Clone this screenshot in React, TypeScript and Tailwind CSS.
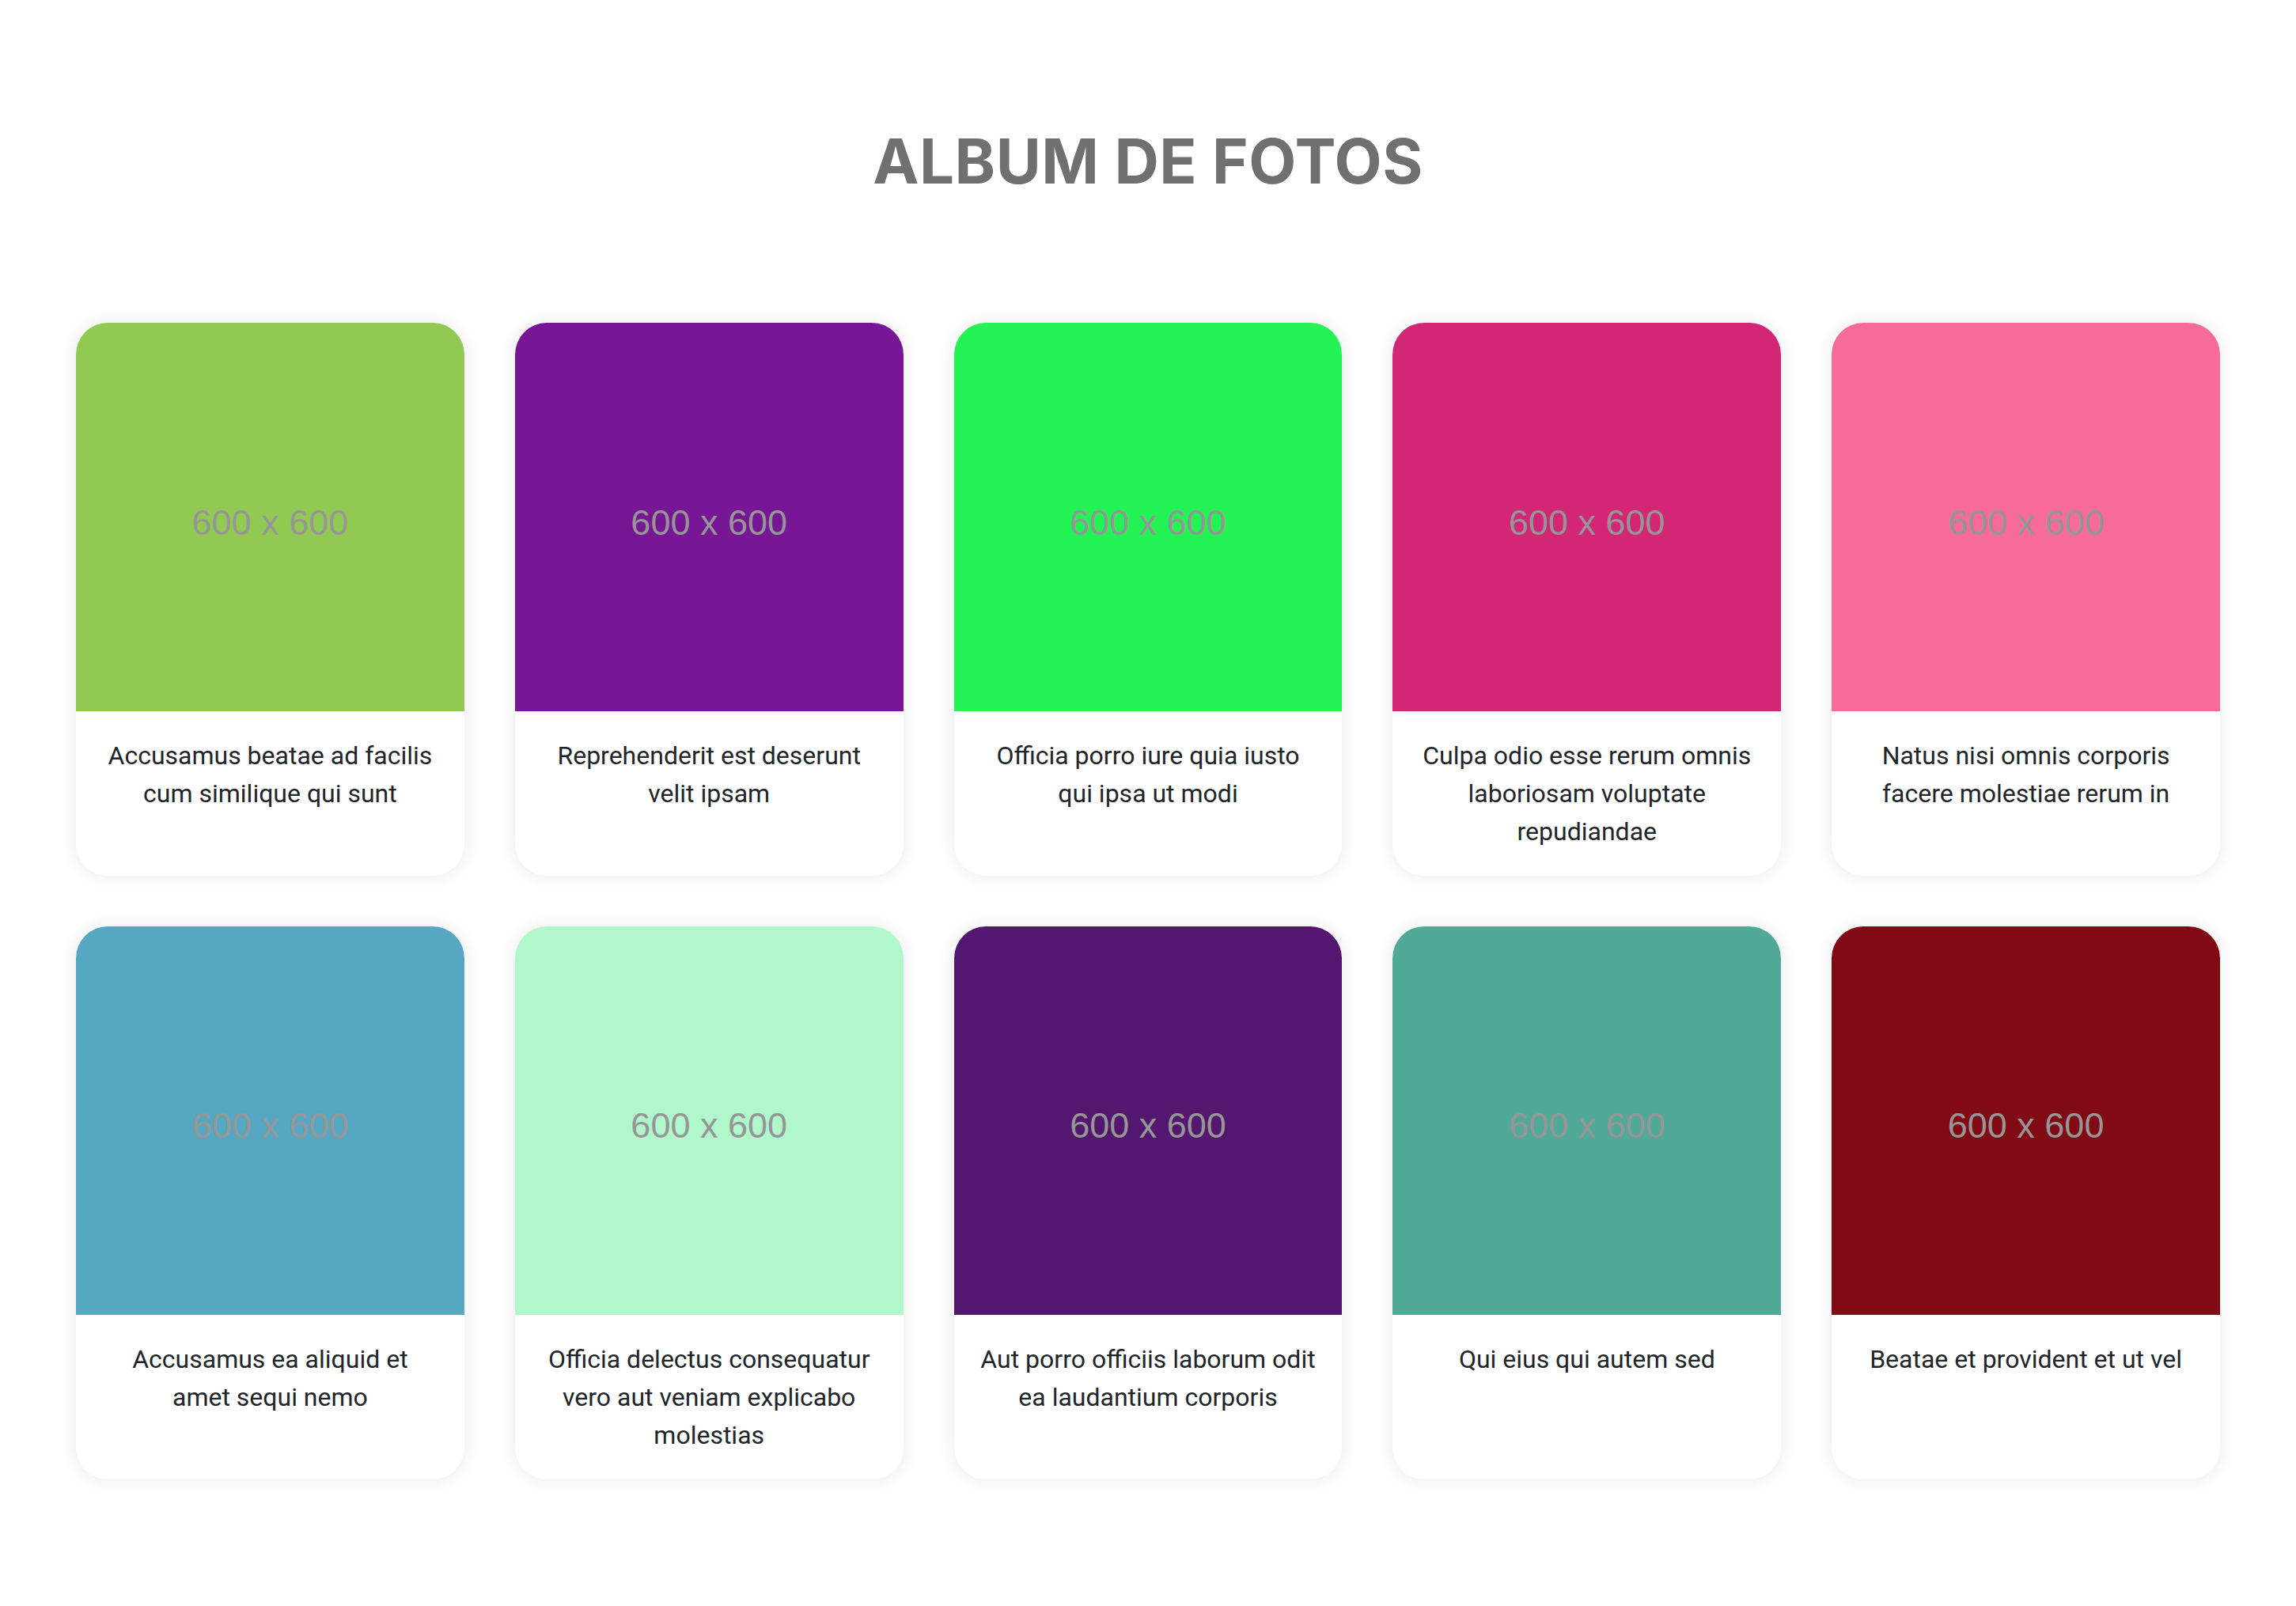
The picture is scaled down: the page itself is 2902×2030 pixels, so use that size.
import React from "react";

const photos: { color: string; title: string }[] = [
  { color: "#92c952", title: "Accusamus beatae ad facilis cum similique qui sunt" },
  { color: "#771796", title: "Reprehenderit est deserunt velit ipsam" },
  { color: "#24f355", title: "Officia porro iure quia iusto qui ipsa ut modi" },
  { color: "#d32776", title: "Culpa odio esse rerum omnis laboriosam voluptate repudiandae" },
  { color: "#f66b97", title: "Natus nisi omnis corporis facere molestiae rerum in" },
  { color: "#56a8c2", title: "Accusamus ea aliquid et amet sequi nemo" },
  { color: "#b0f7cc", title: "Officia delectus consequatur vero aut veniam explicabo molestias" },
  { color: "#54176f", title: "Aut porro officiis laborum odit ea laudantium corporis" },
  { color: "#51aa97", title: "Qui eius qui autem sed" },
  { color: "#810b14", title: "Beatae et provident et ut vel" },
];

export default function App() {
  return (
    <div className="min-h-screen bg-white pt-[165px] pb-[160px]">
      <h1
        className="text-center text-[78px] leading-none font-bold text-[#707070] tracking-[0.5px]"
        style={{ fontFamily: "Inter, 'Noto Sans', sans-serif" }}
      >
        ALBUM DE FOTOS
      </h1>
      <div className="mt-[165px] px-[96px] grid grid-cols-5 gap-[64px]">
        {photos.map((p, i) => (
          <div
            key={i}
            className="flex flex-col overflow-hidden rounded-[40px] bg-white shadow-[0_0_24px_rgba(0,0,0,0.09)]"
          >
            <div
              className="aspect-square w-full flex items-center justify-center pt-[14px]"
              style={{ backgroundColor: p.color }}
            >
              <span
                className="text-[45px] text-[#969696]"
                style={{ fontFamily: "'Liberation Sans', Arial, sans-serif" }}
              >
                600 x 600
              </span>
            </div>
            <div className="flex-1 px-[33px] pt-[32px] pb-[32px]">
              <p
                className="text-center text-[32px] leading-[48px] text-[#212529]"
                style={{ fontFamily: "Roboto, sans-serif" }}
              >
                {p.title}
              </p>
            </div>
          </div>
        ))}
      </div>
    </div>
  );
}
